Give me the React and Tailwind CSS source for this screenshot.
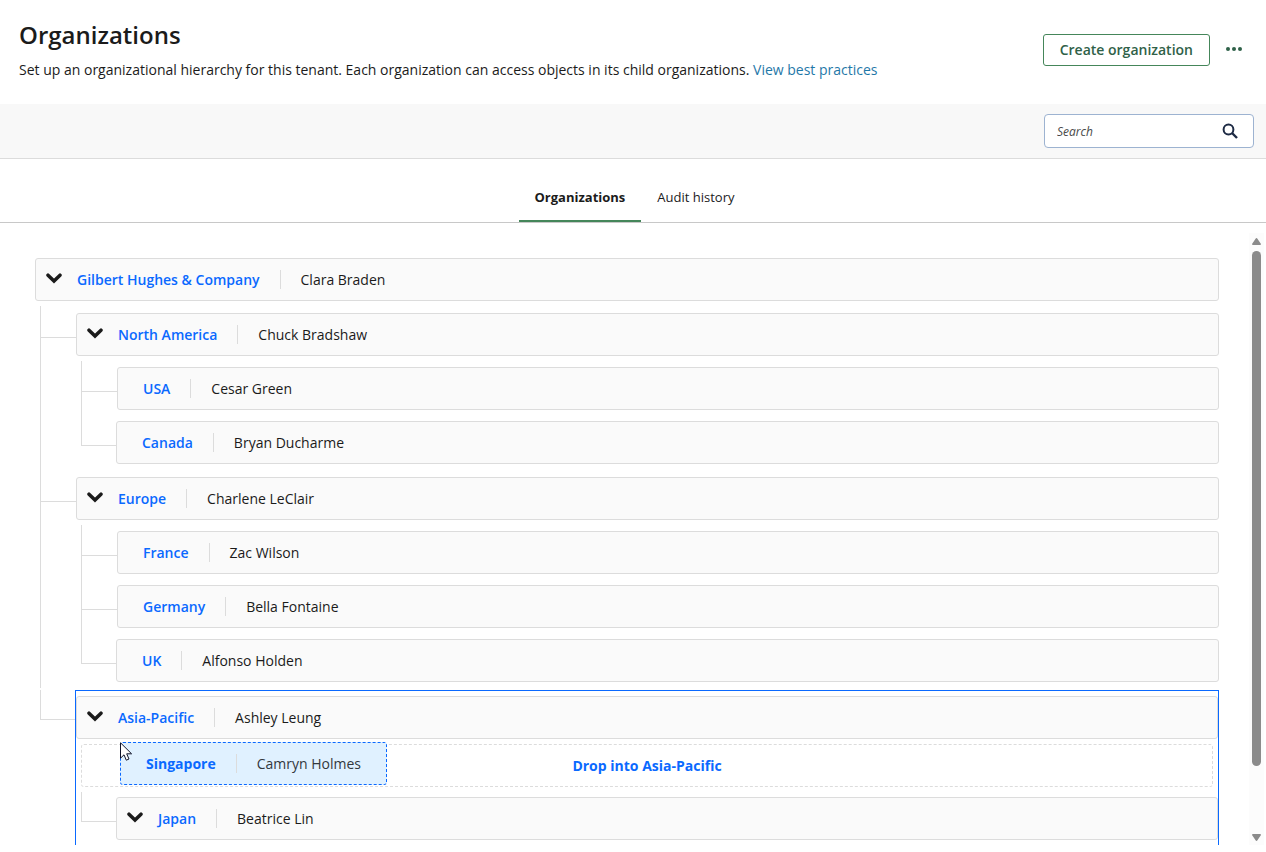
import React from 'react';

const organizations = {
  name: 'Gilbert Hughes & Company',
  owner: 'Clara Braden',
  children: [
    {
      name: 'North America',
      owner: 'Chuck Bradshaw',
      children: [
        { name: 'USA', owner: 'Cesar Green' },
        { name: 'Canada', owner: 'Bryan Ducharme' },
      ],
    },
    {
      name: 'Europe',
      owner: 'Charlene LeClair',
      children: [
        { name: 'France', owner: 'Zac Wilson' },
        { name: 'Germany', owner: 'Bella Fontaine' },
        { name: 'UK', owner: 'Alfonso Holden' },
      ],
    },
    {
      name: 'Asia-Pacific',
      owner: 'Ashley Leung',
      dropTarget: true,
      children: [{ name: 'Japan', owner: 'Beatrice Lin', children: [] }],
    },
  ],
};

const dragged = { name: 'Singapore', owner: 'Camryn Holmes' };

const ChevronIcon = () => (
  <svg width="16" height="11" viewBox="0 0 16 11" fill="none" aria-hidden="true">
    <path d="M2 2.2 L8 8.1 L14 2.2" stroke="#1b1b1b" strokeWidth="3.5" strokeLinecap="round" />
  </svg>
);

const SearchIcon = () => (
  <svg width="16" height="16" viewBox="0 0 16 16" fill="none" aria-hidden="true">
    <circle cx="6.5" cy="6.5" r="4.9" stroke="#1d2a44" strokeWidth="2" />
    <path d="M10 10 L15 15" stroke="#1d2a44" strokeWidth="2.4" />
  </svg>
);

const CursorIcon = () => (
  <svg width="13" height="20" viewBox="0 0 13 20" aria-hidden="true">
    <path
      d="M0.5 0.8 V16.2 L4 12.8 L6.3 18.2 L9 17 L6.7 11.8 H11.6 Z"
      fill="#fff"
      stroke="#10152b"
      strokeWidth="1"
    />
  </svg>
);

const Separator = () => <span className="mx-5 h-[19px] w-px bg-[#dcdcdc]" />;

const OrgRow = ({ org }) => (
  <div className="flex h-[43px] items-center rounded-[3px] border border-[#dcdcdc] bg-[#fafafa] text-sm">
    {org.children ? (
      <button type="button" aria-label={`Collapse ${org.name}`} className="ml-2.5 mr-[15px] pb-0.5">
        <ChevronIcon />
      </button>
    ) : (
      <span className="w-[25px]" />
    )}
    <a href="#" className="font-semibold text-[#0a69ff]">
      {org.name}
    </a>
    <Separator />
    <span>{org.owner}</span>
  </div>
);

const DropZone = ({ target }) => (
  <div className="relative mx-[5px] mt-[5px] flex h-[43px] items-center justify-center rounded-[3px] border border-dashed border-[#dcdcdc] text-sm font-bold text-[#0a69ff]">
    Drop into {target}
    {/* Card being dragged */}
    <div className="absolute -top-[3px] left-[38px] flex h-[43px] items-center rounded-[3px] border border-dashed border-[#0a69ff] bg-[#e0f1ff] px-[25px] font-normal">
      <span className="font-bold">{dragged.name}</span>
      <Separator />
      <span className="text-[#33383d]">{dragged.owner}</span>
      <span className="absolute -left-px -top-px">
        <CursorIcon />
      </span>
    </div>
  </div>
);

const OrgList = ({ items }) => (
  <ul className="ml-[5px] mt-[5px] pb-px">
    {items.map((org, index) => (
      <OrgItem key={org.name} org={org} isLast={index === items.length - 1} />
    ))}
  </ul>
);

const OrgItem = ({ org, isLast }) => {
  const lineHeight = !org.children ? 'h-[31px]' : isLast ? 'h-[30px]' : 'h-8';
  const topSpace = !org.children ? 'pt-1.5' : isLast ? 'pt-[5px]' : 'pt-[7px]';
  const bottomSpace = org.children?.length ? '' : 'pb-[5px]';

  return (
    <li className={`flex ${org.dropTarget ? 'mt-0.5' : ''}`}>
      {/* Connector lines */}
      <div className={`flex shrink-0 flex-col ${isLast ? 'w-[35px]' : 'w-9'}`}>
        <div className={`border-b border-l border-[#dcdcdc] ${lineHeight}`} />
        {!isLast && <div className="flex-1 border-l border-[#dcdcdc]" />}
      </div>

      <div
        className={`min-w-0 flex-1 ${topSpace} ${bottomSpace} ${
          org.dropTarget ? 'border border-b-0 border-[#0a69ff]' : ''
        }`}
      >
        <OrgRow org={org} />
        {org.dropTarget && <DropZone target={org.name} />}
        {org.children?.length > 0 && <OrgList items={org.children} />}
      </div>
    </li>
  );
};

const Scrollbar = () => (
  <div className="mt-2.5 flex w-[15px] shrink-0 flex-col items-center bg-[#fcfcfc]" aria-hidden="true">
    <svg width="9" height="7" viewBox="0 0 9 7" className="mb-1.5 mt-[5px] shrink-0">
      <path d="M4.5 0 Q5 0 5.6 0.9 L9 6 Q9 7 8 7 H1 Q0 7 0 6 L3.4 0.9 Q4 0 4.5 0 Z" fill="#8b8b8b" />
    </svg>
    <div className="w-[9px] flex-1">
      <div className="h-[89%] rounded-full bg-[#8b8b8b]" />
    </div>
    <svg width="9" height="7" viewBox="0 0 9 7" className="mb-1 mt-1 shrink-0">
      <path d="M4.5 7 Q5 7 5.6 6.1 L9 1 Q9 0 8 0 H1 Q0 0 0 1 L3.4 6.1 Q4 7 4.5 7 Z" fill="#8b8b8b" />
    </svg>
  </div>
);

export default function App() {
  return (
    <div className="flex h-screen flex-col bg-white pb-[7px] font-['Open_Sans',sans-serif] text-[#1b1b1b]">
      {/* Page header */}
      <header className="flex h-[104px] shrink-0 items-start justify-between pl-[19px] pr-6">
        <div className="pt-5">
          <h1 className="text-2xl leading-[30px] font-semibold">Organizations</h1>
          <p className="mt-2.5 text-sm">
            Set up an organizational hierarchy for this tenant. Each organization can access objects in its child
            organizations.{' '}
            <a href="#" className="text-[#1f78a8]">
              View best practices
            </a>
          </p>
        </div>
        <div className="flex items-center gap-4 pt-[34px]">
          <button
            type="button"
            className="h-8 rounded-[3px] border border-[#45865a] px-4 text-sm font-semibold text-[#2f6148]"
          >
            Create organization
          </button>
          <button type="button" aria-label="More actions" className="pb-0.5">
            <svg width="16" height="4" viewBox="0 0 16 4" fill="#2f6148" aria-hidden="true">
              <circle cx="2" cy="2" r="2" />
              <circle cx="8" cy="2" r="2" />
              <circle cx="14" cy="2" r="2" />
            </svg>
          </button>
        </div>
      </header>

      {/* Search toolbar */}
      <div className="flex h-[55px] shrink-0 items-center justify-end border-b border-[#dcdcdc] bg-[#f8f8f8] pr-3">
        <div className="flex h-[34px] w-[210px] items-center rounded-[4px] border border-[#9db3d1] bg-white pl-3 pr-[15px]">
          <input
            type="text"
            aria-label="Search"
            placeholder="Search"
            className="min-w-0 flex-1 pt-0.5 text-xs italic outline-none placeholder:text-[#4a4a4a]"
          />
          <button type="button" aria-label="Run search">
            <SearchIcon />
          </button>
        </div>
      </div>

      {/* Tabs */}
      <nav className="flex h-16 shrink-0 items-end justify-center border-b border-[#c8c8c8] pl-[3px] text-[13px]">
        <a href="#" className="border-b-2 border-[#45865a] px-4 pb-[13px] leading-5 font-bold">
          Organizations
        </a>
        <a href="#" className="border-b-2 border-transparent px-4 pb-[13px] leading-5">
          Audit history
        </a>
      </nav>

      {/* Organization tree */}
      <main className="flex min-h-0 flex-1 pr-0.5">
        <div className="min-w-0 flex-1 overflow-hidden pl-[35px] pr-[30px] pt-[35px]">
          <OrgRow org={organizations} />
          <OrgList items={organizations.children} />
        </div>
        <Scrollbar />
      </main>
    </div>
  );
}
